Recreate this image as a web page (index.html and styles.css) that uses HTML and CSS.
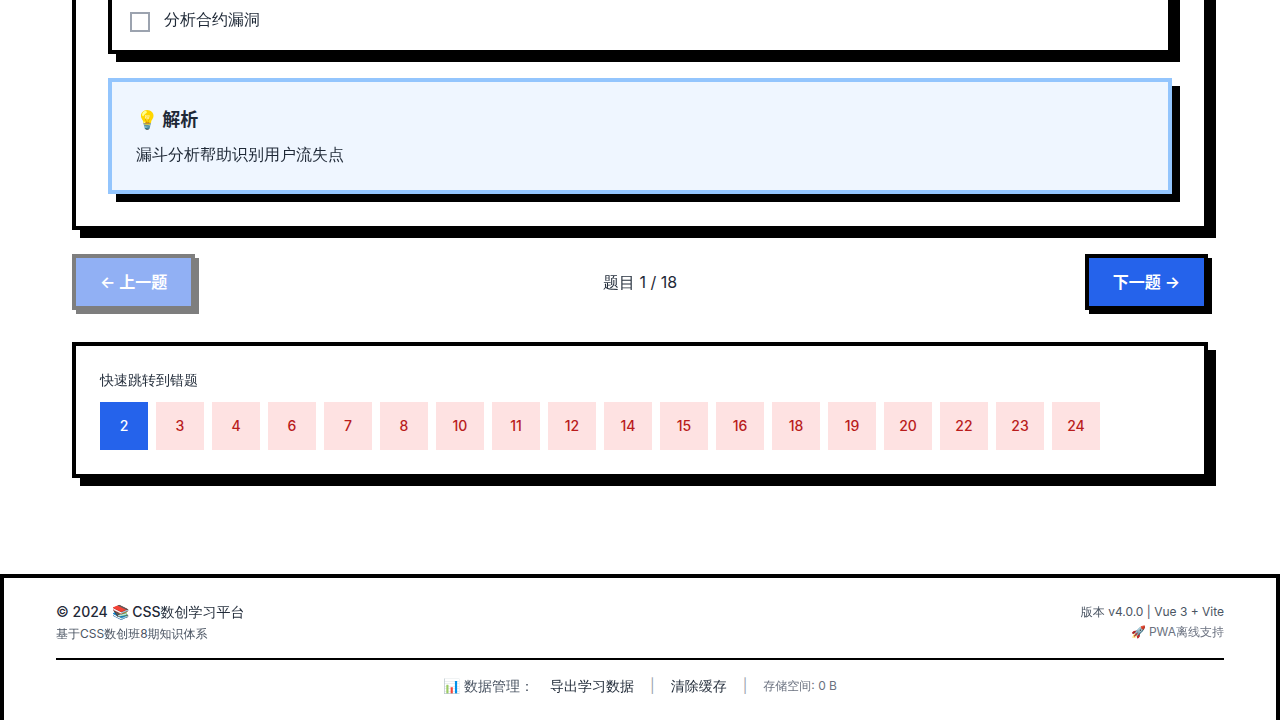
FILE: index.html
```html
<!DOCTYPE html>
<html lang="zh-CN">
<head>
<meta charset="UTF-8">
<meta name="viewport" content="width=device-width, initial-scale=1">
<title>CSS数创学习平台</title>
<link rel="stylesheet" href="styles.css">
</head>
<body>
<main class="page">
  <section class="question-card">
    <div class="options">
      <label class="option">
        <input class="option-check" type="checkbox">
        <span>分析合约漏洞</span>
      </label>
    </div>
    <article class="explanation">
      <h2 class="explanation-title">💡 解析</h2>
      <p class="explanation-text">漏斗分析帮助识别用户流失点</p>
    </article>
  </section>

  <nav class="pager" aria-label="题目导航">
    <button class="pager-button" type="button" disabled>← 上一题</button>
    <span class="pager-count">题目 1 / 18</span>
    <button class="pager-button" type="button">下一题 →</button>
  </nav>

  <section class="jump-panel">
    <p class="jump-label">快速跳转到错题</p>
    <div class="jump-list">
      <button class="jump-item jump-item-current" type="button">2</button>
      <button class="jump-item" type="button">3</button>
      <button class="jump-item" type="button">4</button>
      <button class="jump-item" type="button">6</button>
      <button class="jump-item" type="button">7</button>
      <button class="jump-item" type="button">8</button>
      <button class="jump-item" type="button">10</button>
      <button class="jump-item" type="button">11</button>
      <button class="jump-item" type="button">12</button>
      <button class="jump-item" type="button">14</button>
      <button class="jump-item" type="button">15</button>
      <button class="jump-item" type="button">16</button>
      <button class="jump-item" type="button">18</button>
      <button class="jump-item" type="button">19</button>
      <button class="jump-item" type="button">20</button>
      <button class="jump-item" type="button">22</button>
      <button class="jump-item" type="button">23</button>
      <button class="jump-item" type="button">24</button>
    </div>
  </section>
</main>

<footer class="footer">
  <div class="footer-top">
    <div class="footer-brand">
      <p class="footer-title">© 2024 📚 CSS数创学习平台</p>
      <p class="footer-note">基于CSS数创班8期知识体系</p>
    </div>
    <div class="footer-meta">
      <p class="footer-note">版本 v4.0.0 | Vue 3 + Vite</p>
      <p class="footer-note footer-muted">🚀 PWA离线支持</p>
    </div>
  </div>
  <div class="footer-tools">
    <span class="tools-label">📊 数据管理：</span>
    <button class="tools-action" type="button">导出学习数据</button>
    <span class="tools-divider">|</span>
    <button class="tools-action" type="button">清除缓存</button>
    <span class="tools-divider">|</span>
    <span class="footer-note footer-muted">存储空间: 0 B</span>
  </div>
</footer>
</body>
</html>
```

FILE: styles.css
```css
*,
*::before,
*::after {
  box-sizing: border-box;
}

:root {
  --font-text: Inter, "WenQuanYi Zen Hei", "Droid Sans Fallback", "Noto Sans CJK SC", sans-serif;
  --font-strong: Inter, "Noto Sans CJK SC", sans-serif;
}

body {
  margin: 0;
  background: #fff;
  color: #1f2937;
  font-family: var(--font-text);
  font-size: 16px;
  line-height: 24px;
}

p,
h2 {
  margin: 0;
}

button {
  border: 0;
  padding: 0;
  background: none;
  color: inherit;
  font: inherit;
  cursor: pointer;
}

.page {
  max-width: 1280px;
  margin: 0 auto;
  padding: 0 72px 96px;
}

/* Question card */
.question-card {
  padding: 0 32px 32px;
  border: 4px solid #000;
  border-top: 0;
  box-shadow: 8px 0 0 #000, 8px 8px 0 #000;
}

.options {
  padding: 7px 18px 18px;
  border: 4px solid #000;
  border-top: 0;
  box-shadow: 8px 0 0 #000, 8px 8px 0 #000;
}

.option {
  display: flex;
  align-items: flex-start;
  gap: 14px;
}

.option-check {
  appearance: none;
  width: 20px;
  height: 20px;
  margin: 5px 0 0;
  border: 2px solid #9ca3af;
  background: #fff;
}

.option-check:checked {
  border-color: #2563eb;
  background: #2563eb;
}

.explanation {
  margin-top: 24px;
  padding: 24px;
  border: 4px solid #93c5fd;
  background: #eff6ff;
  box-shadow: 8px 8px 0 #000;
}

.explanation-title {
  margin-bottom: 8px;
  font-family: var(--font-strong);
  font-size: 18px;
  font-weight: 700;
  line-height: 28px;
}

/* Previous / next */
.pager {
  display: flex;
  align-items: center;
  justify-content: space-between;
  margin-top: 24px;
}

.pager-button {
  padding: 12px 24px;
  border: 4px solid #000;
  background: #2563eb;
  box-shadow: 4px 4px 0 #000;
  color: #fff;
  font-family: var(--font-strong);
  font-weight: 600;
}

.pager-button:disabled {
  opacity: 0.5;
  cursor: not-allowed;
}

/* Jump list */
.jump-panel {
  margin-top: 32px;
  padding: 24px;
  border: 4px solid #000;
  box-shadow: 8px 8px 0 #000;
}

.jump-label {
  margin-bottom: 12px;
  font-size: 14px;
  line-height: 20px;
}

.jump-list {
  display: flex;
  flex-wrap: wrap;
  gap: 8px;
}

.jump-item {
  width: 48px;
  height: 48px;
  background: #fee2e2;
  color: #b91c1c;
  font-size: 14px;
  font-weight: 500;
  line-height: 20px;
}

.jump-item-current {
  background: #2563eb;
  color: #fff;
}

/* Footer */
.footer {
  padding: 24px 52px;
  border: 4px solid #000;
  border-bottom: 0;
}

.footer-top {
  display: flex;
  align-items: center;
  justify-content: space-between;
  padding-bottom: 16px;
  border-bottom: 2px solid #000;
}

.footer-brand,
.footer-meta {
  display: flex;
  flex-direction: column;
  gap: 4px;
}

.footer-meta {
  align-items: flex-end;
}

.footer-title {
  font-size: 14px;
  font-weight: 500;
  line-height: 20px;
}

.footer-note {
  color: #4b5563;
  font-size: 12px;
  line-height: 16px;
}

.footer-muted {
  color: #6b7280;
}

.footer-tools {
  display: flex;
  align-items: center;
  justify-content: center;
  gap: 16px;
  padding-top: 16px;
  font-size: 14px;
  line-height: 20px;
}

.tools-label {
  color: #4b5563;
}

.tools-divider {
  color: #9ca3af;
}
```
